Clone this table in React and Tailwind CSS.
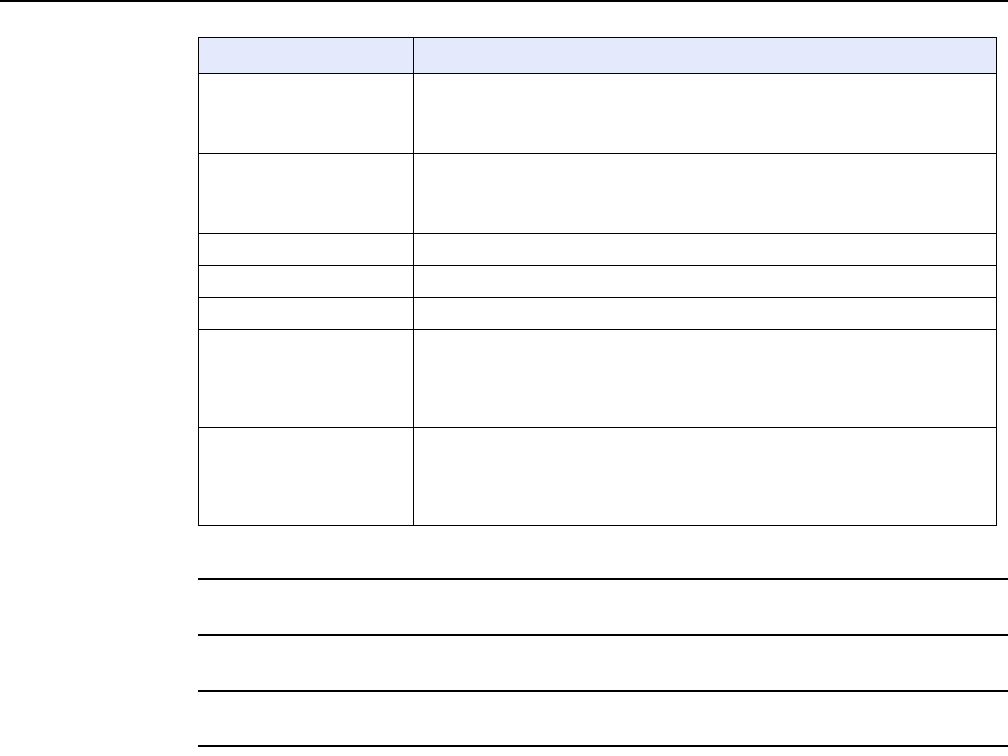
const ROWS = [
  { h: 'h-[79px]' },
  { h: 'h-[79px]' },
  { h: 'h-[31px]' },
  { h: 'h-[31px]' },
  { h: 'h-[31px]' },
  { h: 'h-[97px]' },
  { h: 'h-[97px]' },
]

function Row({ h, last, header }) {
  return (
    <div className={`flex ${last ? '' : 'border-b border-black'} ${header ? 'bg-[#e4eafc]' : 'bg-white'}`}>
      <div className={`w-[215px] ${h} border-r border-black`} />
      <div className={`flex-1 ${h}`} />
    </div>
  )
}

export default function App() {
  return (
    <div className="w-[1008px] min-h-[756px] bg-white flex flex-col" style={{ fontFamily: '"Liberation Sans", Arial, sans-serif' }}>
      <div className="h-[2px] bg-black w-full" />

      <div className="pl-[198px]">
        {/* spec table */}
        <div className="mt-[35px] w-[799px] border border-black">
          <Row h="h-[35px]" header />
          {ROWS.map((r, i) => (
            <Row key={i} h={r.h} last={i === ROWS.length - 1} />
          ))}
        </div>

        {/* rule lines */}
        <div className="mt-[52px] h-[2px] bg-black" />
        <div className="mt-[54px] h-[2px] bg-black" />
        <div className="mt-[54px] h-[2px] bg-black" />
        <div className="mt-[53px] h-[2px] bg-black" />
      </div>
    </div>
  )
}
